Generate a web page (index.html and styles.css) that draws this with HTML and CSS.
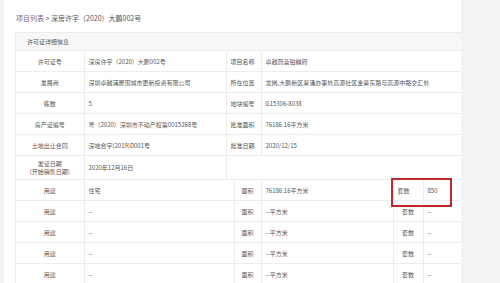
FILE: index.html
```html
<!DOCTYPE html>
<html lang="zh-CN">
  <head>
    <meta charset="UTF-8" />
    <meta name="viewport" content="width=device-width, initial-scale=1.0" />
    <title>深房许字（2020）大鹏002号</title>
    <link rel="stylesheet" href="styles.css">
  </head>
  <body>
    <div class="page">
      <div class="crumb"><a href="#">项目列表</a> &gt; 深房许字（2020）大鹏002号</div>
      <div class="panel">
        <div class="panel-head">许可证详细信息</div>
        <table class="info">
          <colgroup>
            <col class="c1" /><col class="c2" /><col class="c3" /><col />
          </colgroup>
          <tr>
            <td class="label">许可证号</td>
            <td>深房许字（2020）大鹏002号</td>
            <td>项目名称</td>
            <td>卓越蔚蓝铂樾府</td>
          </tr>
          <tr>
            <td class="label">发展商</td>
            <td>深圳卓越浦屋围城市更新投资有限公司</td>
            <td>所在位置</td>
            <td>龙岗,大鹏新区葵涌办事处高源社区金葵东路与高源中路交汇处</td>
          </tr>
          <tr>
            <td class="label">栋数</td>
            <td>5</td>
            <td>地块编号</td>
            <td>G15306-8038</td>
          </tr>
          <tr>
            <td class="label">房产证编号</td>
            <td>粤（2020）深圳市不动产权第0015268号</td>
            <td>批准面积</td>
            <td>76186.16平方米</td>
          </tr>
          <tr>
            <td class="label">土地出让合同</td>
            <td>深地合字(2019)D001号</td>
            <td>批准日期</td>
            <td>2020/12/15</td>
          </tr>
          <tr class="tall">
            <td class="label">发证日期<br />(开始销售日期)</td>
            <td>2020年12月16日</td>
            <td colspan="2"></td>
          </tr>
        </table>
        <table class="info uses">
          <colgroup>
            <col class="u1" /><col class="u2" /><col class="u3" /><col class="u4" /><col class="u5" /><col />
          </colgroup>
          <tr>
            <td class="label">用途</td>
            <td>住宅</td>
            <td class="label">面积</td>
            <td>76186.16平方米</td>
            <td class="count">套数<div class="mark"></div></td>
            <td>850</td>
          </tr>
          <tr>
            <td class="label">用途</td><td>--</td><td class="label">面积</td><td>--平方米</td><td class="label">套数</td><td>--</td>
          </tr>
          <tr>
            <td class="label">用途</td><td>--</td><td class="label">面积</td><td>--平方米</td><td class="label">套数</td><td>--</td>
          </tr>
          <tr>
            <td class="label">用途</td><td>--</td><td class="label">面积</td><td>--平方米</td><td class="label">套数</td><td>--</td>
          </tr>
          <tr>
            <td class="label">用途</td><td>--</td><td class="label">面积</td><td>--平方米</td><td class="label">套数</td><td>--</td>
          </tr>
        </table>
      </div>
    </div>
  </body>
</html>
```

FILE: styles.css
```css
body {
  margin: 0;
  background-color: #f3f3f5;
  font-family: "Noto Sans CJK SC", "Microsoft YaHei", sans-serif;
  color: #555;
  overflow: hidden;
}
.page {
  margin-left: 4px;
  width: 457px;
  height: 100vh;
  box-sizing: border-box;
  overflow: hidden;
  padding: 13px 0 0 11px;
  background-color: #fff;
}
.crumb {
  font-size: 7px;
  line-height: 10px;
  color: #555;
  padding-left: 1px;
}
.crumb a {
  color: #7d6898;
  text-decoration: none;
}
.panel {
  margin-top: 9px;
  width: 446px;
  border: 1px solid #ececec;
}
.panel-head {
  height: 17px;
  line-height: 17px;
  padding-left: 11px;
  font-size: 6px;
  background-color: #f7f7f7;
  border-bottom: 1px solid #ececec;
}
table.info {
  width: 100%;
  border-collapse: collapse;
  table-layout: fixed;
  font-size: 6px;
}
table.info td {
  height: 20px;
  padding: 0 0 0 4px;
  border: 1px solid #ededed;
  white-space: nowrap;
  overflow: hidden;
}
table.info tr:first-child td { border-top: none; }
table.info td:first-child { border-left: none; }
table.info td:last-child { border-right: none; }
table.info td.label {
  text-align: center;
  padding: 0;
}
table.info tr.tall td {
  height: 23px;
  line-height: 8px;
}
col.c1 { width: 68px; }
col.c2 { width: 142px; }
col.c3 { width: 35px; }
col.u1 { width: 68px; }
col.u2 { width: 150px; }
col.u3 { width: 27px; }
col.u4 { width: 132px; }
col.u5 { width: 30px; }
td.count {
  position: relative;
  overflow: visible !important;
}
.mark {
  position: absolute;
  left: -3px;
  top: -2px;
  width: 57px;
  height: 25px;
  border: 2px solid #c0282d;
}
```
